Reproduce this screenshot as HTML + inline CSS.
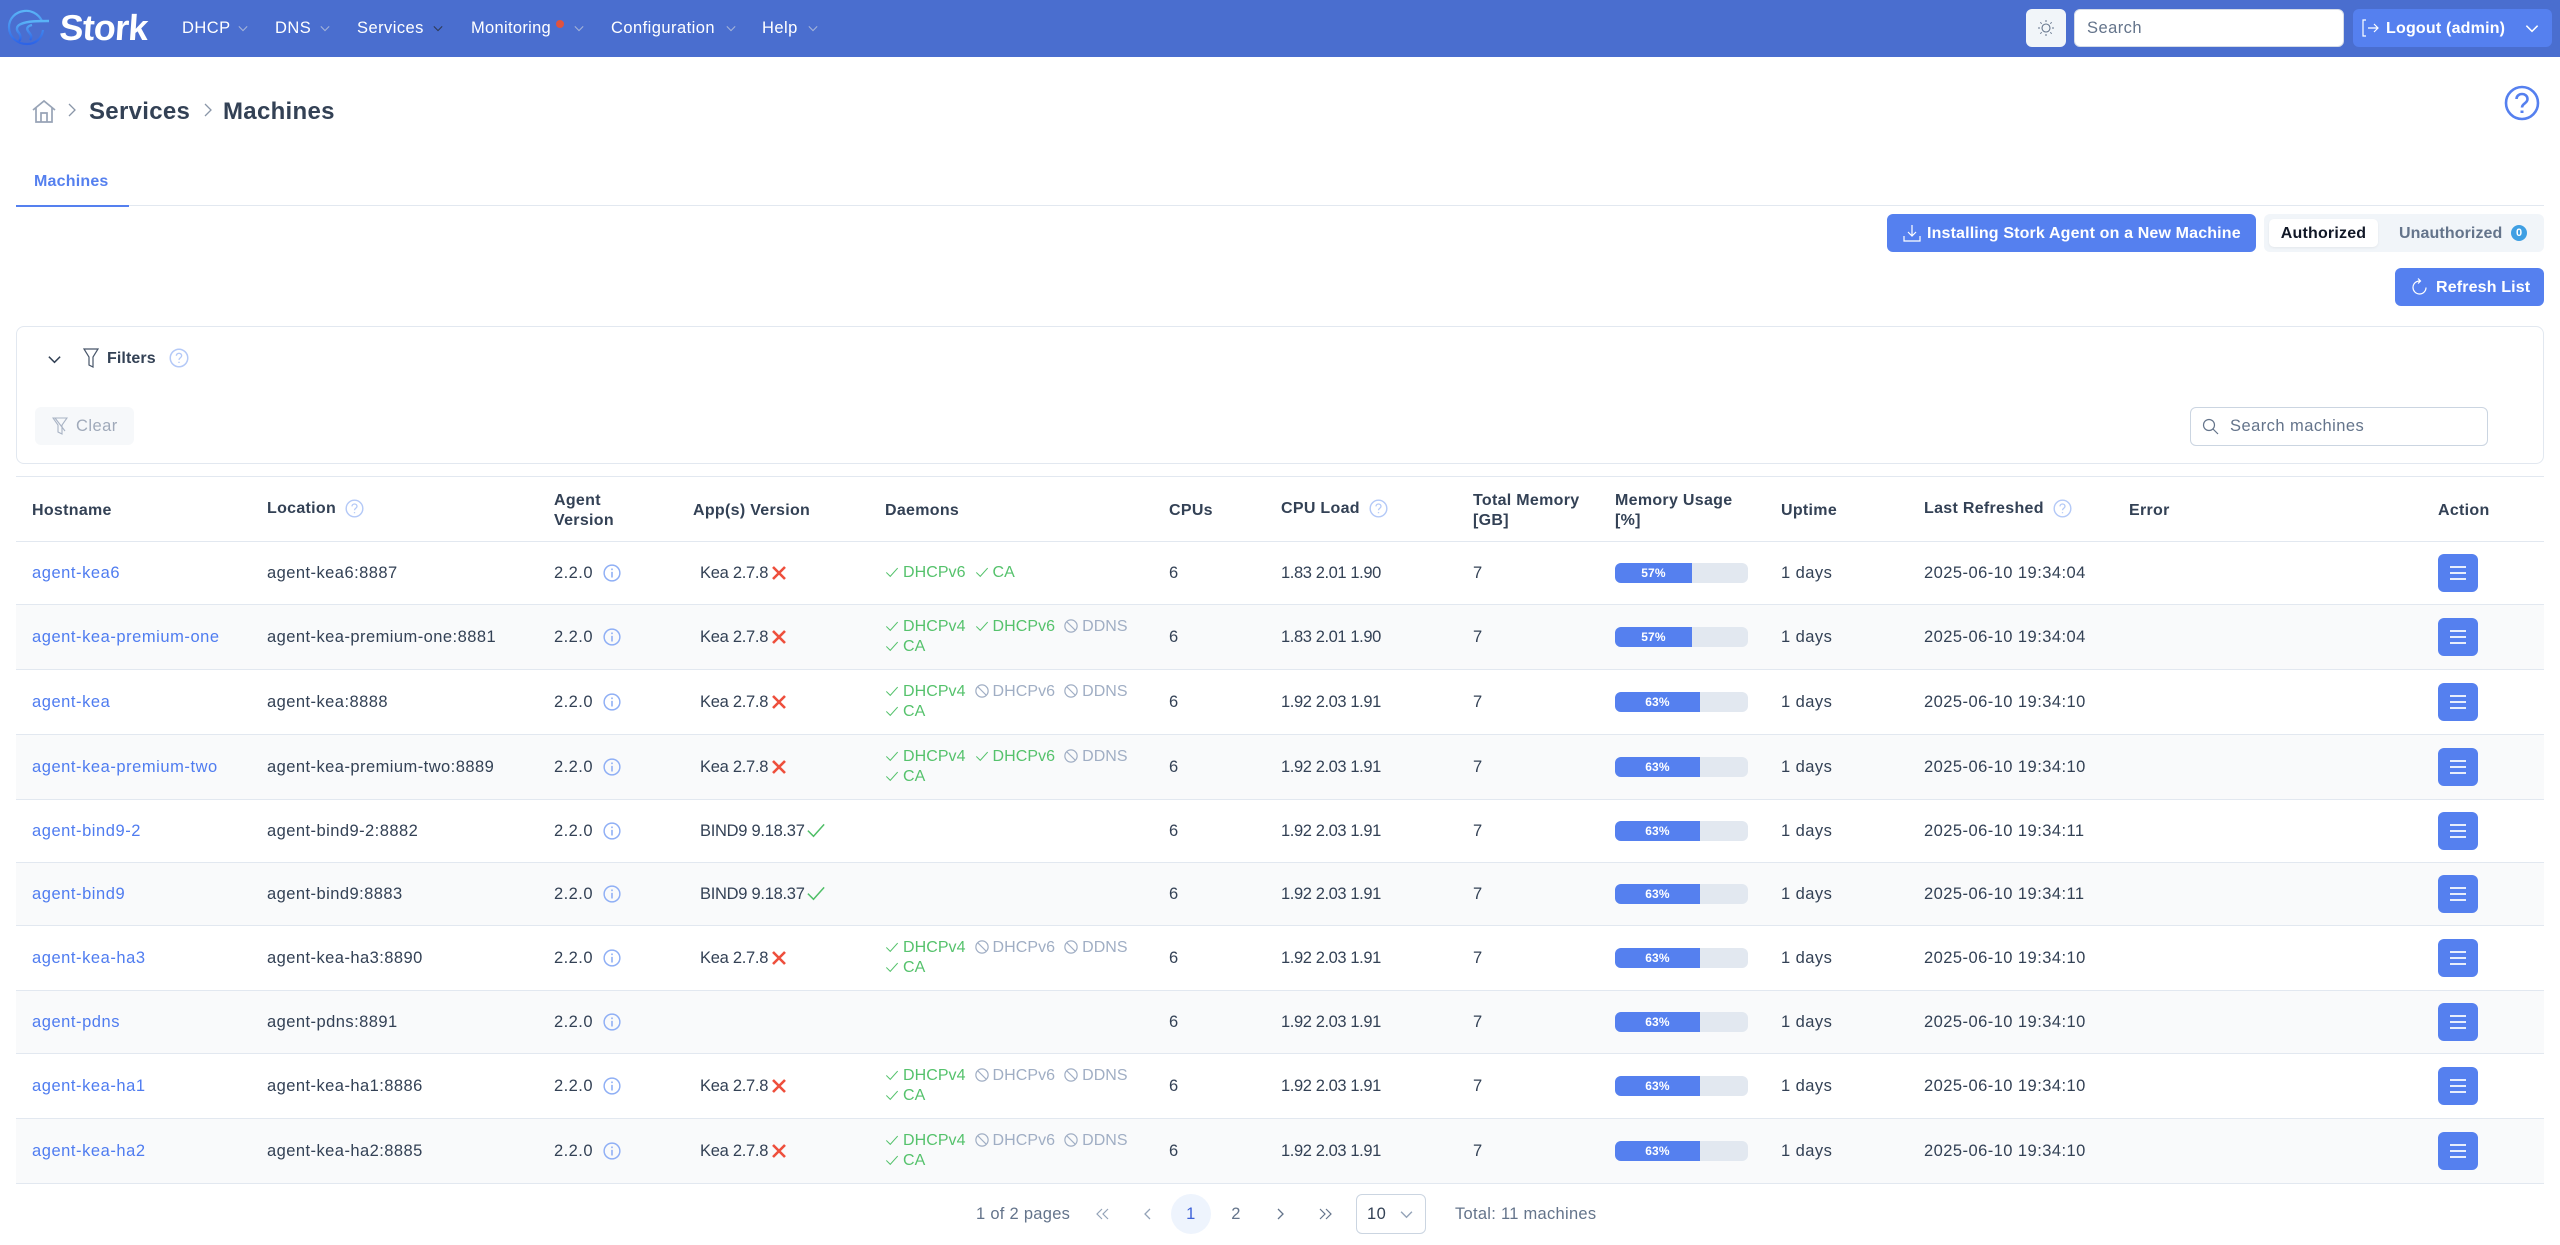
<!DOCTYPE html>
<html lang="en"><head><meta charset="utf-8"><title>Stork - Machines</title>
<style>
*{box-sizing:border-box}
html,body{margin:0;padding:0;width:2560px;height:1245px;overflow:hidden;background:#fff}
body{font-family:"Liberation Sans",sans-serif;font-size:16.5px;letter-spacing:.45px;color:#334155;position:relative}
.a{position:absolute;white-space:nowrap}
svg{display:inline-block;vertical-align:middle;fill:none;stroke:currentColor}
.nav{left:0;top:0;width:2560px;height:57px;background:#4a6ecf}
.ni{top:17px;line-height:22px;color:#fff}
.btn{background:#5580ef;color:#fff;border-radius:6px;height:38px;line-height:40px;font-weight:bold;font-size:16px;letter-spacing:.15px}
table{position:absolute;left:16px;top:476px;width:2528px;table-layout:fixed;border-collapse:separate;border-spacing:0}
th,td{box-sizing:border-box;padding:0 0 0 16px;text-align:left;vertical-align:middle;border-bottom:1px solid #e2e8f0;line-height:20px;white-space:nowrap;overflow:visible}
th{font-size:16px;font-weight:bold;letter-spacing:.3px;border-top:1px solid #e2e8f0;height:66px;color:#334155;padding-top:3px}
tr.s td{height:63px}tr.l td{height:65px}
tr:nth-child(even) td{background:#f9fafb}
td:nth-child(4){letter-spacing:-.28px}
td:nth-child(5){font-size:16px;letter-spacing:.05px}
td:nth-child(7){letter-spacing:-.4px}
td a{color:#4f7cf0;text-decoration:none;letter-spacing:.55px}
.q{color:#b4c9f7;margin-left:9px;position:relative;top:-1px}
.up{position:relative;top:-2px;display:inline-block}
.i{color:#8fafF5;margin-left:10px;position:relative;top:-1px}
.v{padding-left:23px}
.x{color:#ee4f3c;margin-left:3px;position:relative;top:-1px}
.ok{color:#4fbf67;margin-left:1px;position:relative;top:-1px;width:20px;height:20px}
.g{color:#55c26c;margin-right:9px;display:inline-block}
.o{color:#a0aec4;margin-right:9px;display:inline-block}
.g svg,.o svg{width:14px;height:14px;margin-right:4px;position:relative;top:-1px}
.bar{display:block;width:133px;height:20px;background:#e2e8f0;border-radius:6px;overflow:hidden}
.bar b{display:block;height:20px;background:#5580ef;color:#fff;font-size:12px;line-height:20px;text-align:center;letter-spacing:.2px}
.m{display:block;width:40px;height:38px;border-radius:6px;background:#5580ef;margin-left:0;position:relative}
.m i{position:absolute;left:12px;width:16px;height:2px;background:#e8eefc}
.p{color:#64748b;letter-spacing:.28px}
</style></head>
<body>
<svg width="0" height="0" style="position:absolute"><defs>
<symbol id="c" viewBox="0 0 16 16"><path d="M1.5 8.5 6 13 14.5 3.5" stroke-width="1.2" fill="none"/></symbol>
<symbol id="b" viewBox="0 0 16 16"><circle cx="8" cy="8" r="7" stroke-width="1.4" fill="none"/><path d="M3 3 13 13" stroke-width="1.4"/></symbol>
<symbol id="x" viewBox="0 0 16 16"><path d="M2 2 14 14M14 2 2 14" stroke-width="2.6"/></symbol>
<symbol id="n" viewBox="0 0 16 16"><circle cx="8" cy="8" r="7" stroke-width="1.3" fill="none"/><path d="M8 7v5M8 4v1.4" stroke-width="1.4"/></symbol>
<symbol id="h" viewBox="0 0 16 16"><circle cx="8" cy="8" r="7" stroke-width="1.2" fill="none"/><path d="M5.9 6.2c0-1.2 1-2 2.1-2s2.1.8 2.1 2c0 1.600-2.100 1.600-2.100 3.300M8 11v1" stroke-width="1.100" fill="none"/></symbol>
<symbol id="d" viewBox="0 0 12 8"><path d="M1 1.500 6 6.500 11 1.500" stroke-width="1.300" fill="none"/></symbol>
</defs></svg>

<div class="a nav"></div>
<svg class="a" style="left:6px;top:8px" width="46" height="42" viewBox="0 0 46 42">
<defs><linearGradient id="lg" x1="0" y1="0" x2="0" y2="1"><stop offset="0" stop-color="#5ab4f7"/><stop offset="1" stop-color="#2d63e6"/></linearGradient></defs>
<path d="M36 13C32 5 24 2 18 3 9 4 3 11 3 19c0 10 8 17 18 17 9 0 15-6 16-14" stroke="url(#lg)" stroke-width="2.200"/>
<path d="M43 13C32 13 22 13 15 16c-5 2-5 6-2 9 2 3 2 6 0 8M26 17c-4 1-6 3-4 6 2 3 5 5 2 9" stroke="url(#lg)" stroke-width="2.400"/>
</svg>
<div class="a" style="left:58px;top:6px;font:bold 36px/44px 'Liberation Sans',sans-serif;letter-spacing:-.8px;color:#fff;transform:skewX(-4deg);transform-origin:0 100%">Stork</div>

<div class="a ni" style="left:182px">DHCP</div><svg class="a" style="left:238px;top:25px;color:#a5b4d8" width="10" height="7"><use href="#d"/></svg>
<div class="a ni" style="left:275px">DNS</div><svg class="a" style="left:320px;top:25px;color:#a5b4d8" width="10" height="7"><use href="#d"/></svg>
<div class="a ni" style="left:357px">Services</div><svg class="a" style="left:433px;top:25px;color:#2f3a55" width="10" height="7"><use href="#d"/></svg>
<div class="a ni" style="left:471px;letter-spacing:.3px">Monitoring</div><div class="a" style="left:556px;top:20px;width:8px;height:8px;border-radius:50%;background:#e0523f"></div><svg class="a" style="left:574px;top:25px;color:#a5b4d8" width="10" height="7"><use href="#d"/></svg>
<div class="a ni" style="left:611px">Configuration</div><svg class="a" style="left:726px;top:25px;color:#a5b4d8" width="10" height="7"><use href="#d"/></svg>
<div class="a ni" style="left:762px">Help</div><svg class="a" style="left:808px;top:25px;color:#a5b4d8" width="10" height="7"><use href="#d"/></svg>

<div class="a" style="left:2026px;top:9px;width:40px;height:38px;border-radius:6px;background:#f1f5f9"></div>
<svg class="a" style="left:2037px;top:19px;color:#64748b" width="18" height="18" viewBox="0 0 18 18"><circle cx="9" cy="9" r="4" stroke-width="1.100"/><path d="M9 1v2M9 15v2M1 9h2M15 9h2M3.300 3.300l1.400 1.400M13.300 13.300l1.400 1.400M3.300 14.700l1.400-1.400M13.300 4.700l1.400-1.400" stroke-width="1"/></svg>
<div class="a" style="left:2074px;top:9px;width:270px;height:38px;border-radius:6px;background:#fff;border:1px solid #d5dce8;line-height:36px;padding-left:12px;color:#64748b">Search</div>
<div class="a btn" style="left:2353px;top:9px;width:199px"></div>
<svg class="a" style="left:2361px;top:19px;color:#fff" width="18" height="18" viewBox="0 0 18 18"><path d="M5 1H2v16h3M7 9h10M13 5l4 4-4 4" stroke-width="1.200"/></svg>
<div class="a" style="left:2386px;top:18px;line-height:22px;color:#fff;font-weight:bold;font-size:16px;letter-spacing:.2px">Logout (admin)</div>
<svg class="a" style="left:2525px;top:24px;color:#fff" width="14" height="9" viewBox="0 0 12 8"><use href="#d"/></svg>

<svg class="a" style="left:31px;top:99px;color:#97a3b6" width="26" height="24" viewBox="0 0 26 24"><path d="M2 11 13 2l11 9M5 9v14h16V9M10 23v-9h6v9" stroke-width="1.700"/></svg>
<svg class="a" style="left:68px;top:103px;color:#8a96a8" width="8" height="14" viewBox="0 0 8 14"><path d="M1 1 7 7 1 13" stroke-width="1.300"/></svg>
<div class="a" style="left:89px;top:98px;font-weight:bold;font-size:24px;line-height:28px;letter-spacing:.3px">Services</div>
<svg class="a" style="left:204px;top:103px;color:#8a96a8" width="8" height="14" viewBox="0 0 8 14"><path d="M1 1 7 7 1 13" stroke-width="1.300"/></svg>
<div class="a" style="left:223px;top:98px;font-weight:bold;font-size:24px;line-height:28px;letter-spacing:.3px">Machines</div>
<svg class="a" style="left:2504px;top:85px;color:#5580ef" width="36" height="36" viewBox="0 0 36 36"><circle cx="18" cy="18" r="16" stroke-width="2.600"/><path d="M12.500 14c0-3 2.500-5 5.500-5s5.500 2 5.500 5c0 4.500-5.500 4.300-5.500 8.500" stroke-width="2.600"/><path d="M18 25.500v2.500" stroke-width="3"/></svg>

<div class="a" style="left:34px;top:172px;line-height:20px;font-size:16px;font-weight:bold;color:#5580ef;letter-spacing:.2px">Machines</div>
<div class="a" style="left:16px;top:205px;width:2528px;height:1px;background:#e2e8f0"></div>
<div class="a" style="left:16px;top:204.500px;width:113px;height:2px;background:#5580ef"></div>

<div class="a btn" style="left:1887px;top:214px;width:369px;padding-left:40px">Installing Stork Agent on a New Machine</div>
<svg class="a" style="left:1903px;top:224px;color:#fff" width="18" height="18" viewBox="0 0 18 18"><path d="M9 1v11M5 8l4 4 4-4M1 12v5h16v-5" stroke-width="1.200"/></svg>
<div class="a" style="left:2264px;top:214px;width:280px;height:38px;border-radius:6px;background:#f1f5f9"></div>
<div class="a" style="left:2269px;top:219px;width:109px;height:28px;border-radius:5px;background:#fff;box-shadow:0 1px 2px rgba(0,0,0,.06);text-align:center;line-height:29px;color:#111827;font-weight:bold;font-size:16px;letter-spacing:.2px">Authorized</div>
<div class="a" style="left:2399px;top:224px;line-height:20px;color:#64748b;font-weight:bold;font-size:16px;letter-spacing:.1px">Unauthorized</div>
<div class="a" style="left:2511px;top:225px;width:16px;height:16px;border-radius:50%;background:#3f9fe3;border:0;color:#fff;font-size:11px;font-weight:bold;line-height:16px;text-align:center;letter-spacing:0">0</div>
<div class="a btn" style="left:2395px;top:268px;width:149px;padding-left:41px">Refresh List</div>
<svg class="a" style="left:2411px;top:278px;color:#fff" width="17" height="18" viewBox="0 0 17 18"><path d="M9 3a6.500 6.500 0 1 0 6 6.500" stroke-width="1.200" fill="none"/><path d="M7 .5 9.500 3 7 5.500" stroke-width="1.200" fill="none"/></svg>

<div class="a" style="left:16px;top:326px;width:2528px;height:138px;border:1px solid #e2e8f0;border-radius:8px"></div>
<svg class="a" style="left:47px;top:355px;color:#334155" width="15" height="9" viewBox="0 0 12 8"><use href="#d"/></svg>
<svg class="a" style="left:83px;top:348px;color:#475569" width="16" height="20" viewBox="0 0 16 20"><path d="M1 1h14L10 9v10l-4-2V9z" stroke-width="1.200"/></svg>
<div class="a" style="left:107px;top:349px;line-height:20px;font-weight:bold;font-size:16px;letter-spacing:.1px">Filters</div>
<svg class="a" style="left:169px;top:348px;color:#b4c9f7" width="20" height="20"><use href="#h"/></svg>
<div class="a" style="left:35px;top:407px;width:99px;height:38px;border-radius:6px;background:#f6f8fa"></div>
<svg class="a" style="left:52px;top:417px;color:#a8b3c4" width="16" height="18" viewBox="0 0 16 18"><path d="M1 1h14L10 8v9l-4-2V8zM3 1l10 13" stroke-width="1.100"/></svg>
<div class="a" style="left:76px;top:416px;line-height:20px;color:#a0aaba">Clear</div>
<div class="a" style="left:2190px;top:407px;width:298px;height:39px;border-radius:6px;border:1px solid #cbd5e1;background:#fff;line-height:37px;padding-left:39px;color:#64748b">Search machines</div>
<svg class="a" style="left:2202px;top:418px;color:#64748b" width="17" height="17" viewBox="0 0 17 17"><circle cx="7" cy="7" r="5.500" stroke-width="1.200"/><path d="M11 11l5 5" stroke-width="1.200"/></svg>

<table>
<colgroup><col style="width:235px"><col style="width:287px"><col style="width:139px"><col style="width:192px"><col style="width:284px"><col style="width:112px"><col style="width:192px"><col style="width:142px"><col style="width:166px"><col style="width:143px"><col style="width:205px"><col style="width:309px"><col style="width:122px"></colgroup>
<thead><tr><th>Hostname</th><th><span class="up">Location</span><svg class="q" width="19" height="19" style="top:-2px"><use href="#h"/></svg></th><th>Agent<br>Version</th><th>App(s) Version</th><th>Daemons</th><th>CPUs</th><th><span class="up">CPU Load</span><svg class="q" width="19" height="19" style="top:-2px"><use href="#h"/></svg></th><th>Total Memory<br>[GB]</th><th>Memory Usage<br>[%]</th><th>Uptime</th><th><span class="up">Last Refreshed</span><svg class="q" width="19" height="19" style="top:-2px"><use href="#h"/></svg></th><th>Error</th><th>Action</th></tr></thead>
<tbody>
<tr class="s"><td><a>agent-kea6</a></td><td>agent-kea6:8887</td><td>2.2.0<svg class="i" width="18" height="18"><use href="#n"/></svg></td><td class="v">Kea 2.7.8<svg class="x" width="16" height="16"><use href="#x"/></svg></td><td><span class="g"><svg width="14" height="14"><use href="#c"/></svg>DHCPv6</span><span class="g"><svg width="14" height="14"><use href="#c"/></svg>CA</span></td><td>6</td><td>1.83 2.01 1.90</td><td>7</td><td><span class="bar"><b style="width:77px">57%</b></span></td><td>1 days</td><td>2025-06-10 19:34:04</td><td></td><td><span class="m"><i style="top:12px"></i><i style="top:18px"></i><i style="top:24px"></i></span></td></tr>
<tr class="l"><td><a>agent-kea-premium-one</a></td><td>agent-kea-premium-one:8881</td><td>2.2.0<svg class="i" width="18" height="18"><use href="#n"/></svg></td><td class="v">Kea 2.7.8<svg class="x" width="16" height="16"><use href="#x"/></svg></td><td><span class="g"><svg width="14" height="14"><use href="#c"/></svg>DHCPv4</span><span class="g"><svg width="14" height="14"><use href="#c"/></svg>DHCPv6</span><span class="o"><svg width="14" height="14"><use href="#b"/></svg>DDNS</span><br><span class="g"><svg width="14" height="14"><use href="#c"/></svg>CA</span></td><td>6</td><td>1.83 2.01 1.90</td><td>7</td><td><span class="bar"><b style="width:77px">57%</b></span></td><td>1 days</td><td>2025-06-10 19:34:04</td><td></td><td><span class="m"><i style="top:12px"></i><i style="top:18px"></i><i style="top:24px"></i></span></td></tr>
<tr class="l"><td><a>agent-kea</a></td><td>agent-kea:8888</td><td>2.2.0<svg class="i" width="18" height="18"><use href="#n"/></svg></td><td class="v">Kea 2.7.8<svg class="x" width="16" height="16"><use href="#x"/></svg></td><td><span class="g"><svg width="14" height="14"><use href="#c"/></svg>DHCPv4</span><span class="o"><svg width="14" height="14"><use href="#b"/></svg>DHCPv6</span><span class="o"><svg width="14" height="14"><use href="#b"/></svg>DDNS</span><br><span class="g"><svg width="14" height="14"><use href="#c"/></svg>CA</span></td><td>6</td><td>1.92 2.03 1.91</td><td>7</td><td><span class="bar"><b style="width:85px">63%</b></span></td><td>1 days</td><td>2025-06-10 19:34:10</td><td></td><td><span class="m"><i style="top:12px"></i><i style="top:18px"></i><i style="top:24px"></i></span></td></tr>
<tr class="l"><td><a>agent-kea-premium-two</a></td><td>agent-kea-premium-two:8889</td><td>2.2.0<svg class="i" width="18" height="18"><use href="#n"/></svg></td><td class="v">Kea 2.7.8<svg class="x" width="16" height="16"><use href="#x"/></svg></td><td><span class="g"><svg width="14" height="14"><use href="#c"/></svg>DHCPv4</span><span class="g"><svg width="14" height="14"><use href="#c"/></svg>DHCPv6</span><span class="o"><svg width="14" height="14"><use href="#b"/></svg>DDNS</span><br><span class="g"><svg width="14" height="14"><use href="#c"/></svg>CA</span></td><td>6</td><td>1.92 2.03 1.91</td><td>7</td><td><span class="bar"><b style="width:85px">63%</b></span></td><td>1 days</td><td>2025-06-10 19:34:10</td><td></td><td><span class="m"><i style="top:12px"></i><i style="top:18px"></i><i style="top:24px"></i></span></td></tr>
<tr class="s"><td><a>agent-bind9-2</a></td><td>agent-bind9-2:8882</td><td>2.2.0<svg class="i" width="18" height="18"><use href="#n"/></svg></td><td class="v">BIND9 9.18.37<svg class="ok" width="20" height="20"><use href="#c"/></svg></td><td></td><td>6</td><td>1.92 2.03 1.91</td><td>7</td><td><span class="bar"><b style="width:85px">63%</b></span></td><td>1 days</td><td>2025-06-10 19:34:11</td><td></td><td><span class="m"><i style="top:12px"></i><i style="top:18px"></i><i style="top:24px"></i></span></td></tr>
<tr class="s"><td><a>agent-bind9</a></td><td>agent-bind9:8883</td><td>2.2.0<svg class="i" width="18" height="18"><use href="#n"/></svg></td><td class="v">BIND9 9.18.37<svg class="ok" width="20" height="20"><use href="#c"/></svg></td><td></td><td>6</td><td>1.92 2.03 1.91</td><td>7</td><td><span class="bar"><b style="width:85px">63%</b></span></td><td>1 days</td><td>2025-06-10 19:34:11</td><td></td><td><span class="m"><i style="top:12px"></i><i style="top:18px"></i><i style="top:24px"></i></span></td></tr>
<tr class="l"><td><a>agent-kea-ha3</a></td><td>agent-kea-ha3:8890</td><td>2.2.0<svg class="i" width="18" height="18"><use href="#n"/></svg></td><td class="v">Kea 2.7.8<svg class="x" width="16" height="16"><use href="#x"/></svg></td><td><span class="g"><svg width="14" height="14"><use href="#c"/></svg>DHCPv4</span><span class="o"><svg width="14" height="14"><use href="#b"/></svg>DHCPv6</span><span class="o"><svg width="14" height="14"><use href="#b"/></svg>DDNS</span><br><span class="g"><svg width="14" height="14"><use href="#c"/></svg>CA</span></td><td>6</td><td>1.92 2.03 1.91</td><td>7</td><td><span class="bar"><b style="width:85px">63%</b></span></td><td>1 days</td><td>2025-06-10 19:34:10</td><td></td><td><span class="m"><i style="top:12px"></i><i style="top:18px"></i><i style="top:24px"></i></span></td></tr>
<tr class="s"><td><a>agent-pdns</a></td><td>agent-pdns:8891</td><td>2.2.0<svg class="i" width="18" height="18"><use href="#n"/></svg></td><td></td><td></td><td>6</td><td>1.92 2.03 1.91</td><td>7</td><td><span class="bar"><b style="width:85px">63%</b></span></td><td>1 days</td><td>2025-06-10 19:34:10</td><td></td><td><span class="m"><i style="top:12px"></i><i style="top:18px"></i><i style="top:24px"></i></span></td></tr>
<tr class="l"><td><a>agent-kea-ha1</a></td><td>agent-kea-ha1:8886</td><td>2.2.0<svg class="i" width="18" height="18"><use href="#n"/></svg></td><td class="v">Kea 2.7.8<svg class="x" width="16" height="16"><use href="#x"/></svg></td><td><span class="g"><svg width="14" height="14"><use href="#c"/></svg>DHCPv4</span><span class="o"><svg width="14" height="14"><use href="#b"/></svg>DHCPv6</span><span class="o"><svg width="14" height="14"><use href="#b"/></svg>DDNS</span><br><span class="g"><svg width="14" height="14"><use href="#c"/></svg>CA</span></td><td>6</td><td>1.92 2.03 1.91</td><td>7</td><td><span class="bar"><b style="width:85px">63%</b></span></td><td>1 days</td><td>2025-06-10 19:34:10</td><td></td><td><span class="m"><i style="top:12px"></i><i style="top:18px"></i><i style="top:24px"></i></span></td></tr>
<tr class="l"><td><a>agent-kea-ha2</a></td><td>agent-kea-ha2:8885</td><td>2.2.0<svg class="i" width="18" height="18"><use href="#n"/></svg></td><td class="v">Kea 2.7.8<svg class="x" width="16" height="16"><use href="#x"/></svg></td><td><span class="g"><svg width="14" height="14"><use href="#c"/></svg>DHCPv4</span><span class="o"><svg width="14" height="14"><use href="#b"/></svg>DHCPv6</span><span class="o"><svg width="14" height="14"><use href="#b"/></svg>DDNS</span><br><span class="g"><svg width="14" height="14"><use href="#c"/></svg>CA</span></td><td>6</td><td>1.92 2.03 1.91</td><td>7</td><td><span class="bar"><b style="width:85px">63%</b></span></td><td>1 days</td><td>2025-06-10 19:34:10</td><td></td><td><span class="m"><i style="top:12px"></i><i style="top:18px"></i><i style="top:24px"></i></span></td></tr>
</tbody></table>

<div class="a p" style="left:976px;top:1204px;line-height:20px">1 of 2 pages</div>
<svg class="a" style="left:1096px;top:1208px;color:#94a3b8" width="14" height="12" viewBox="0 0 14 12"><path d="M6 1 1 6l5 5M12 1 7 6l5 5" stroke-width="1.200"/></svg>
<svg class="a" style="left:1144px;top:1208px;color:#94a3b8" width="7" height="12" viewBox="0 0 7 12"><path d="M6 1 1 6l5 5" stroke-width="1.300"/></svg>
<div class="a" style="left:1171px;top:1194px;width:40px;height:40px;border-radius:50%;background:#eef4fd;color:#3f63d8;text-align:center;line-height:40px">1</div>
<div class="a p" style="left:1216px;top:1194px;width:40px;text-align:center;line-height:40px">2</div>
<svg class="a" style="left:1277px;top:1208px;color:#64748b" width="7" height="12" viewBox="0 0 7 12"><path d="M1 1 6 6 1 11" stroke-width="1.300"/></svg>
<svg class="a" style="left:1318px;top:1208px;color:#64748b" width="14" height="12" viewBox="0 0 14 12"><path d="M2 1l5 5-5 5M8 1l5 5-5 5" stroke-width="1.200"/></svg>
<div class="a" style="left:1356px;top:1194px;width:70px;height:40px;border-radius:6px;border:1px solid #cbd5e1;background:#fff;line-height:38px;padding-left:10px;color:#334155">10</div>
<svg class="a" style="left:1400px;top:1210px;color:#94a3b8" width="13" height="9" viewBox="0 0 12 8"><use href="#d"/></svg>
<div class="a p" style="left:1455px;top:1204px;line-height:20px">Total: 11 machines</div>
</body></html>
